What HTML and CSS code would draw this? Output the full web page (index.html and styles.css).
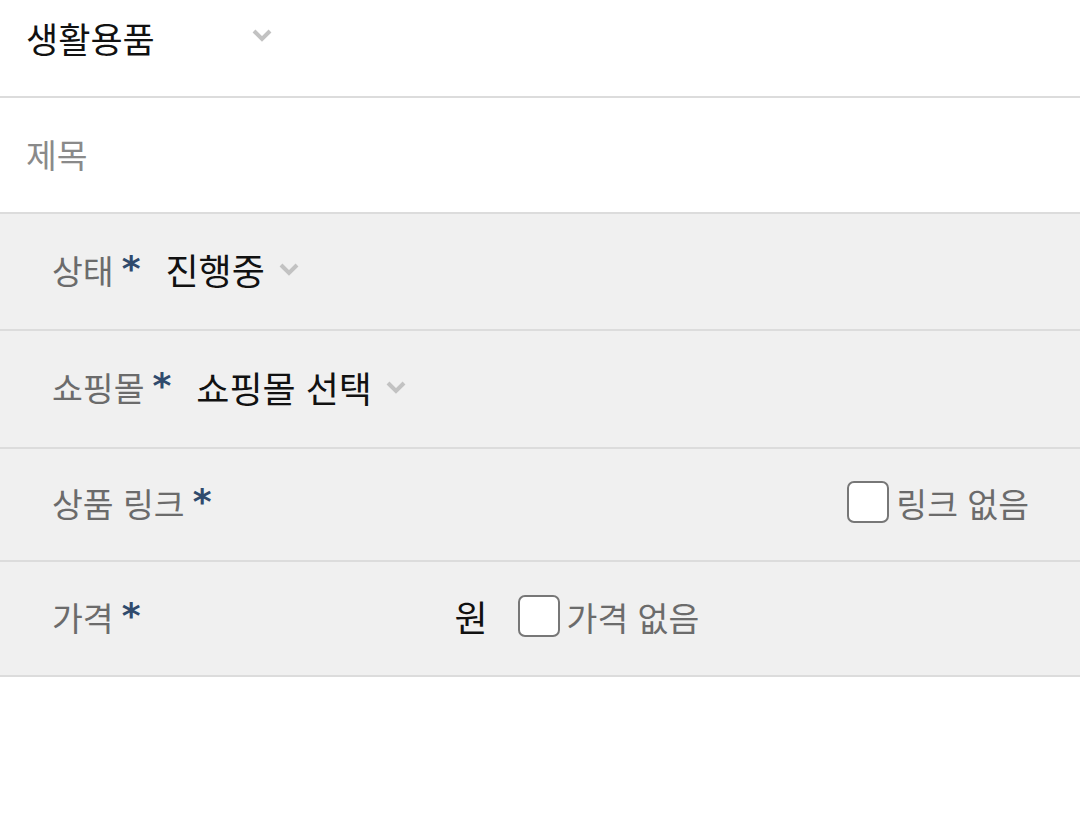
FILE: index.html
```html
<!DOCTYPE html>
<html lang="ko">
<head>
<meta charset="utf-8">
<link rel="stylesheet" href="styles.css">
</head>
<body>
<div class="form">
  <div class="row row-top">
    <span class="select-text">생활용품</span>
    <svg class="chev chev-top" width="20" height="14" viewBox="0 0 20 14"><polyline points="2,3 10,11 18,3" fill="none" stroke="#c2c2c2" stroke-width="4"/></svg>
  </div>
  <div class="row row-title">
    <span class="placeholder">제목</span>
  </div>
  <div class="row row-gray row-status">
    <span class="label">상태<span class="req">*</span></span>
    <span class="value">진행중</span>
    <svg class="chev" width="20" height="14" viewBox="0 0 20 14"><polyline points="2,3 10,11 18,3" fill="none" stroke="#c2c2c2" stroke-width="4"/></svg>
  </div>
  <div class="row row-gray row-mall">
    <span class="label">쇼핑몰<span class="req">*</span></span>
    <span class="value">쇼핑몰 선택</span>
    <svg class="chev" width="20" height="14" viewBox="0 0 20 14"><polyline points="2,3 10,11 18,3" fill="none" stroke="#c2c2c2" stroke-width="4"/></svg>
  </div>
  <div class="row row-gray row-link">
    <span class="label">상품 링크<span class="req">*</span></span>
    <span class="spacer"></span>
    <label class="check"><span class="box"></span><span class="check-text">링크 없음</span></label>
  </div>
  <div class="row row-gray row-price">
    <span class="label">가격<span class="req">*</span></span>
    <span class="won">원</span>
    <label class="check"><span class="box"></span><span class="check-text">가격 없음</span></label>
  </div>
</div>
</body>
</html>
```
FILE: styles.css
```css
html, body {
  margin: 0;
  padding: 0;
  background: #ffffff;
  font-family: "Noto Sans CJK KR", "Noto Sans", sans-serif;
}
.form {
  width: 1080px;
}
.row {
  display: flex;
  align-items: center;
  border-bottom: 2px solid #dcdcdc;
  box-sizing: border-box;
}
.row-top {
  height: 98px;
  padding: 0 0 22px 26px;
}
.select-text {
  font-size: 35px;
  color: #111;
  width: 226px;
}
.chev-top {
  margin-top: -4px;
}
.row-title {
  height: 116px;
  padding: 0 0 4px 26px;
}
.placeholder {
  font-size: 33.5px;
  color: #8a8a8a;
}
.row-gray {
  background: #f0f0f0;
  padding: 0 51px 5px 52px;
}
.row-status { height: 117px; }
.row-mall { height: 118px; }
.row-link { height: 113px; }
.row-price { height: 115px; }
.label {
  font-size: 33.5px;
  color: #6b6b6b;
  display: flex;
  align-items: flex-start;
}
.req {
  color: #2f4a6d;
  font-family: "DejaVu Sans", sans-serif;
  font-size: 36px;
  font-weight: bold;
  line-height: 1;
  margin-left: 8px;
  margin-top: 6px;
}
.value {
  font-size: 36px;
  color: #111;
  margin-left: 25px;
  margin-right: 14px;
}
.chev {
  display: block;
}
.spacer {
  flex: 1;
}
.won {
  font-size: 36px;
  color: #111;
  margin-left: 314px;
  margin-right: 30px;
}
.check {
  display: flex;
  align-items: center;
}
.box {
  width: 38px;
  height: 38px;
  border: 2px solid #777;
  border-radius: 7px;
  background: #fff;
  margin-right: 7px;
}
.check-text {
  font-size: 33.5px;
  color: #6b6b6b;
}
```
